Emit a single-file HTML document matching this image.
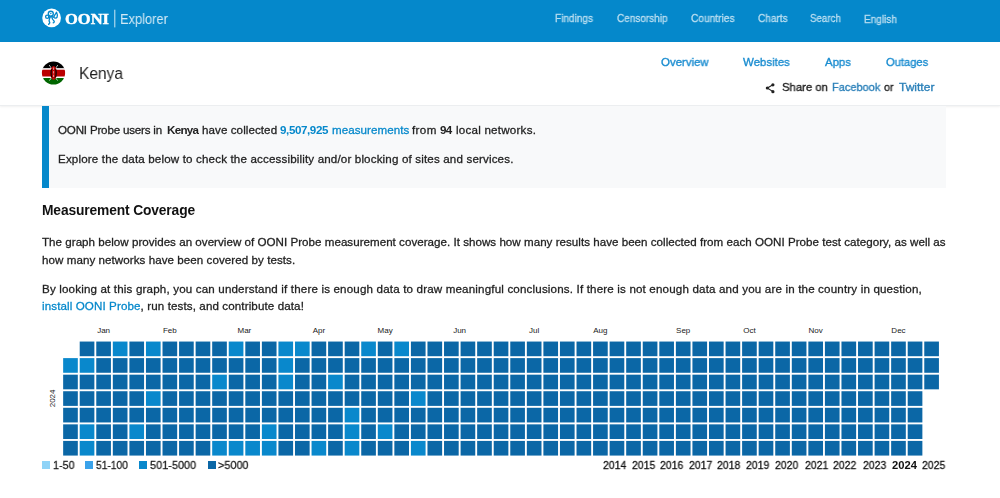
<!DOCTYPE html>
<html><head><meta charset="utf-8">
<style>
html,body{margin:0;padding:0;background:#fff;}
body{width:1000px;height:498px;overflow:hidden;position:relative;font-family:"Liberation Sans",sans-serif;}
.t{position:absolute;white-space:nowrap;will-change:transform;}
.r{-webkit-text-stroke:0.28px currentColor;}
.r b{-webkit-text-stroke:0;}
.t b{font-weight:700;}
#hdr{position:absolute;left:0;top:0;width:1000px;height:42px;background:#0588cb;}
#sub{position:absolute;left:0;top:42px;width:1000px;height:63px;background:#fff;border-bottom:1px solid #eceef0;box-shadow:0 1px 2px rgba(0,0,0,0.06);}
#box{position:absolute;left:42px;top:106px;width:904px;height:82px;background:#f8f9fa;}
#bar{position:absolute;left:42px;top:106px;width:7px;height:82px;background:#0588cb;}
.sq{position:absolute;top:461px;width:8px;height:8px;}
svg{position:absolute;left:0;top:0;}
</style></head>
<body>
<div id="hdr"></div>
<div id="sub"></div>
<div id="box"></div>
<div id="bar"></div>
<!-- logo -->
<svg width="1000" height="498" viewBox="0 0 1000 498" style="pointer-events:none">
  <circle cx="51.6" cy="17.9" r="9.35" fill="#fff"/>
  <g fill="none" stroke="#0588cb" stroke-width="1.35" stroke-linecap="round" stroke-linejoin="round">
    <circle cx="50.8" cy="13.7" r="2.5"/>
    <circle cx="47.2" cy="16.7" r="1.6"/>
    <path d="M56.5 12.3 C57.6 14.6 57.7 16 57.1 17.1 C56.4 18.4 54.5 18.3 54 17.2 C53.6 16.2 55 15.2 56.5 12.3 Z"/>
    <path d="M50.2 16.4 C49.8 18.8 48.4 20.4 49.4 21.6 C50.2 22.6 49.6 23.6 48.6 24.4"/>
    <path d="M51.6 16.3 C52 18.6 53.2 20.2 54 20.9 C54.6 21.6 54.2 22.6 53.2 22.9"/>
    <path d="M48.6 17.4 C49.2 17.6 49.8 17.4 50.2 17 M53.9 17 C53.2 17.2 52.4 17 51.8 16.5"/>
  </g>
  <circle cx="50.8" cy="13.5" r="0.7" fill="#0588cb"/>
  <rect x="114.3" y="9.7" width="1" height="17.7" fill="rgba(255,255,255,0.8)"/>
  <!-- flag -->
  <defs><clipPath id="fc"><circle cx="53.5" cy="73" r="11.6"/></clipPath></defs>
  <g clip-path="url(#fc)">
    <rect x="41" y="60" width="26" height="8.4" fill="#000"/>
    <rect x="41" y="68.4" width="26" height="1.3" fill="#fff"/>
    <rect x="41" y="69.7" width="26" height="7" fill="#bb0000"/>
    <rect x="41" y="76.7" width="26" height="1.3" fill="#fff"/>
    <rect x="41" y="78" width="26" height="8" fill="#006600"/>
    <path d="M49.2 65 L51.6 68.6 M57.8 65 L55.4 68.6 M49.4 80.6 L51.6 77.6 M57.6 80.6 L55.4 77.6" stroke="#fff" stroke-width="0.7"/>
    <ellipse cx="53.6" cy="73" rx="3.1" ry="6.9" fill="#bb0000"/>
    <clipPath id="band"><rect x="41" y="69.2" width="26" height="8"/></clipPath>
    <g clip-path="url(#band)"><ellipse cx="53.6" cy="73" rx="3.1" ry="6.9" fill="#000"/><ellipse cx="53.6" cy="73" rx="1.9" ry="6.9" fill="#bb0000"/></g>
    <path d="M53.6 67.5 L53.6 78.5" stroke="#fff" stroke-width="0.6" stroke-dasharray="2.4 1.2"/>
  </g>
  <!-- share icon -->
  <g fill="#222">
    <circle cx="772.9" cy="84.8" r="1.6"/>
    <circle cx="767.35" cy="88" r="1.6"/>
    <circle cx="772.9" cy="91.65" r="1.6"/>
  </g>
  <path d="M772.9 84.8 L767.35 88 L772.9 91.65" stroke="#222" stroke-width="1.1" fill="none"/>
  <!-- calendar -->
  <g>
<rect x="79.71" y="341.55" width="14.66" height="14.66" fill="#0b67a6"/>
<rect x="96.27" y="341.55" width="14.66" height="14.66" fill="#0b67a6"/>
<rect x="112.83" y="341.55" width="14.66" height="14.66" fill="#0988cc"/>
<rect x="129.39" y="341.55" width="14.66" height="14.66" fill="#0b67a6"/>
<rect x="145.95" y="341.55" width="14.66" height="14.66" fill="#0988cc"/>
<rect x="162.51" y="341.55" width="14.66" height="14.66" fill="#0b67a6"/>
<rect x="179.07" y="341.55" width="14.66" height="14.66" fill="#0b67a6"/>
<rect x="195.63" y="341.55" width="14.66" height="14.66" fill="#0b67a6"/>
<rect x="212.19" y="341.55" width="14.66" height="14.66" fill="#0b67a6"/>
<rect x="228.75" y="341.55" width="14.66" height="14.66" fill="#0988cc"/>
<rect x="245.31" y="341.55" width="14.66" height="14.66" fill="#0b67a6"/>
<rect x="261.87" y="341.55" width="14.66" height="14.66" fill="#0b67a6"/>
<rect x="278.43" y="341.55" width="14.66" height="14.66" fill="#0988cc"/>
<rect x="294.99" y="341.55" width="14.66" height="14.66" fill="#0988cc"/>
<rect x="311.55" y="341.55" width="14.66" height="14.66" fill="#0b67a6"/>
<rect x="328.11" y="341.55" width="14.66" height="14.66" fill="#0b67a6"/>
<rect x="344.67" y="341.55" width="14.66" height="14.66" fill="#0b67a6"/>
<rect x="361.23" y="341.55" width="14.66" height="14.66" fill="#0988cc"/>
<rect x="377.79" y="341.55" width="14.66" height="14.66" fill="#0b67a6"/>
<rect x="394.35" y="341.55" width="14.66" height="14.66" fill="#0988cc"/>
<rect x="410.91" y="341.55" width="14.66" height="14.66" fill="#0b67a6"/>
<rect x="427.47" y="341.55" width="14.66" height="14.66" fill="#0b67a6"/>
<rect x="444.03" y="341.55" width="14.66" height="14.66" fill="#0b67a6"/>
<rect x="460.59" y="341.55" width="14.66" height="14.66" fill="#0b67a6"/>
<rect x="477.15" y="341.55" width="14.66" height="14.66" fill="#0b67a6"/>
<rect x="493.71" y="341.55" width="14.66" height="14.66" fill="#0b67a6"/>
<rect x="510.27" y="341.55" width="14.66" height="14.66" fill="#0b67a6"/>
<rect x="526.83" y="341.55" width="14.66" height="14.66" fill="#0b67a6"/>
<rect x="543.39" y="341.55" width="14.66" height="14.66" fill="#0b67a6"/>
<rect x="559.95" y="341.55" width="14.66" height="14.66" fill="#0b67a6"/>
<rect x="576.51" y="341.55" width="14.66" height="14.66" fill="#0b67a6"/>
<rect x="593.07" y="341.55" width="14.66" height="14.66" fill="#0b67a6"/>
<rect x="609.63" y="341.55" width="14.66" height="14.66" fill="#0b67a6"/>
<rect x="626.19" y="341.55" width="14.66" height="14.66" fill="#0b67a6"/>
<rect x="642.75" y="341.55" width="14.66" height="14.66" fill="#0b67a6"/>
<rect x="659.31" y="341.55" width="14.66" height="14.66" fill="#0b67a6"/>
<rect x="675.87" y="341.55" width="14.66" height="14.66" fill="#0b67a6"/>
<rect x="692.43" y="341.55" width="14.66" height="14.66" fill="#0b67a6"/>
<rect x="708.99" y="341.55" width="14.66" height="14.66" fill="#0b67a6"/>
<rect x="725.55" y="341.55" width="14.66" height="14.66" fill="#0b67a6"/>
<rect x="742.11" y="341.55" width="14.66" height="14.66" fill="#0b67a6"/>
<rect x="758.67" y="341.55" width="14.66" height="14.66" fill="#0b67a6"/>
<rect x="775.23" y="341.55" width="14.66" height="14.66" fill="#0b67a6"/>
<rect x="791.79" y="341.55" width="14.66" height="14.66" fill="#0b67a6"/>
<rect x="808.35" y="341.55" width="14.66" height="14.66" fill="#0b67a6"/>
<rect x="824.91" y="341.55" width="14.66" height="14.66" fill="#0b67a6"/>
<rect x="841.47" y="341.55" width="14.66" height="14.66" fill="#0b67a6"/>
<rect x="858.03" y="341.55" width="14.66" height="14.66" fill="#0b67a6"/>
<rect x="874.59" y="341.55" width="14.66" height="14.66" fill="#0b67a6"/>
<rect x="891.15" y="341.55" width="14.66" height="14.66" fill="#0b67a6"/>
<rect x="907.71" y="341.55" width="14.66" height="14.66" fill="#0b67a6"/>
<rect x="924.27" y="341.55" width="14.66" height="14.66" fill="#0b67a6"/>
<rect x="63.15" y="358.11" width="14.66" height="14.66" fill="#0988cc"/>
<rect x="79.71" y="358.11" width="14.66" height="14.66" fill="#0988cc"/>
<rect x="96.27" y="358.11" width="14.66" height="14.66" fill="#0b67a6"/>
<rect x="112.83" y="358.11" width="14.66" height="14.66" fill="#0b67a6"/>
<rect x="129.39" y="358.11" width="14.66" height="14.66" fill="#0b67a6"/>
<rect x="145.95" y="358.11" width="14.66" height="14.66" fill="#0b67a6"/>
<rect x="162.51" y="358.11" width="14.66" height="14.66" fill="#0b67a6"/>
<rect x="179.07" y="358.11" width="14.66" height="14.66" fill="#0b67a6"/>
<rect x="195.63" y="358.11" width="14.66" height="14.66" fill="#0b67a6"/>
<rect x="212.19" y="358.11" width="14.66" height="14.66" fill="#0b67a6"/>
<rect x="228.75" y="358.11" width="14.66" height="14.66" fill="#0b67a6"/>
<rect x="245.31" y="358.11" width="14.66" height="14.66" fill="#0b67a6"/>
<rect x="261.87" y="358.11" width="14.66" height="14.66" fill="#0b67a6"/>
<rect x="278.43" y="358.11" width="14.66" height="14.66" fill="#0988cc"/>
<rect x="294.99" y="358.11" width="14.66" height="14.66" fill="#0b67a6"/>
<rect x="311.55" y="358.11" width="14.66" height="14.66" fill="#0b67a6"/>
<rect x="328.11" y="358.11" width="14.66" height="14.66" fill="#0b67a6"/>
<rect x="344.67" y="358.11" width="14.66" height="14.66" fill="#0b67a6"/>
<rect x="361.23" y="358.11" width="14.66" height="14.66" fill="#0b67a6"/>
<rect x="377.79" y="358.11" width="14.66" height="14.66" fill="#0b67a6"/>
<rect x="394.35" y="358.11" width="14.66" height="14.66" fill="#0b67a6"/>
<rect x="410.91" y="358.11" width="14.66" height="14.66" fill="#0b67a6"/>
<rect x="427.47" y="358.11" width="14.66" height="14.66" fill="#0b67a6"/>
<rect x="444.03" y="358.11" width="14.66" height="14.66" fill="#0b67a6"/>
<rect x="460.59" y="358.11" width="14.66" height="14.66" fill="#0b67a6"/>
<rect x="477.15" y="358.11" width="14.66" height="14.66" fill="#0b67a6"/>
<rect x="493.71" y="358.11" width="14.66" height="14.66" fill="#0b67a6"/>
<rect x="510.27" y="358.11" width="14.66" height="14.66" fill="#0b67a6"/>
<rect x="526.83" y="358.11" width="14.66" height="14.66" fill="#0b67a6"/>
<rect x="543.39" y="358.11" width="14.66" height="14.66" fill="#0b67a6"/>
<rect x="559.95" y="358.11" width="14.66" height="14.66" fill="#0b67a6"/>
<rect x="576.51" y="358.11" width="14.66" height="14.66" fill="#0b67a6"/>
<rect x="593.07" y="358.11" width="14.66" height="14.66" fill="#0b67a6"/>
<rect x="609.63" y="358.11" width="14.66" height="14.66" fill="#0b67a6"/>
<rect x="626.19" y="358.11" width="14.66" height="14.66" fill="#0b67a6"/>
<rect x="642.75" y="358.11" width="14.66" height="14.66" fill="#0b67a6"/>
<rect x="659.31" y="358.11" width="14.66" height="14.66" fill="#0b67a6"/>
<rect x="675.87" y="358.11" width="14.66" height="14.66" fill="#0b67a6"/>
<rect x="692.43" y="358.11" width="14.66" height="14.66" fill="#0b67a6"/>
<rect x="708.99" y="358.11" width="14.66" height="14.66" fill="#0b67a6"/>
<rect x="725.55" y="358.11" width="14.66" height="14.66" fill="#0b67a6"/>
<rect x="742.11" y="358.11" width="14.66" height="14.66" fill="#0b67a6"/>
<rect x="758.67" y="358.11" width="14.66" height="14.66" fill="#0b67a6"/>
<rect x="775.23" y="358.11" width="14.66" height="14.66" fill="#0b67a6"/>
<rect x="791.79" y="358.11" width="14.66" height="14.66" fill="#0b67a6"/>
<rect x="808.35" y="358.11" width="14.66" height="14.66" fill="#0b67a6"/>
<rect x="824.91" y="358.11" width="14.66" height="14.66" fill="#0b67a6"/>
<rect x="841.47" y="358.11" width="14.66" height="14.66" fill="#0b67a6"/>
<rect x="858.03" y="358.11" width="14.66" height="14.66" fill="#0b67a6"/>
<rect x="874.59" y="358.11" width="14.66" height="14.66" fill="#0b67a6"/>
<rect x="891.15" y="358.11" width="14.66" height="14.66" fill="#0b67a6"/>
<rect x="907.71" y="358.11" width="14.66" height="14.66" fill="#0b67a6"/>
<rect x="924.27" y="358.11" width="14.66" height="14.66" fill="#0b67a6"/>
<rect x="63.15" y="374.67" width="14.66" height="14.66" fill="#0b67a6"/>
<rect x="79.71" y="374.67" width="14.66" height="14.66" fill="#0b67a6"/>
<rect x="96.27" y="374.67" width="14.66" height="14.66" fill="#0b67a6"/>
<rect x="112.83" y="374.67" width="14.66" height="14.66" fill="#0b67a6"/>
<rect x="129.39" y="374.67" width="14.66" height="14.66" fill="#0b67a6"/>
<rect x="145.95" y="374.67" width="14.66" height="14.66" fill="#0b67a6"/>
<rect x="162.51" y="374.67" width="14.66" height="14.66" fill="#0b67a6"/>
<rect x="179.07" y="374.67" width="14.66" height="14.66" fill="#0b67a6"/>
<rect x="195.63" y="374.67" width="14.66" height="14.66" fill="#0b67a6"/>
<rect x="212.19" y="374.67" width="14.66" height="14.66" fill="#0988cc"/>
<rect x="228.75" y="374.67" width="14.66" height="14.66" fill="#0b67a6"/>
<rect x="245.31" y="374.67" width="14.66" height="14.66" fill="#0b67a6"/>
<rect x="261.87" y="374.67" width="14.66" height="14.66" fill="#0b67a6"/>
<rect x="278.43" y="374.67" width="14.66" height="14.66" fill="#0988cc"/>
<rect x="294.99" y="374.67" width="14.66" height="14.66" fill="#0b67a6"/>
<rect x="311.55" y="374.67" width="14.66" height="14.66" fill="#0b67a6"/>
<rect x="328.11" y="374.67" width="14.66" height="14.66" fill="#0988cc"/>
<rect x="344.67" y="374.67" width="14.66" height="14.66" fill="#0b67a6"/>
<rect x="361.23" y="374.67" width="14.66" height="14.66" fill="#0b67a6"/>
<rect x="377.79" y="374.67" width="14.66" height="14.66" fill="#0b67a6"/>
<rect x="394.35" y="374.67" width="14.66" height="14.66" fill="#0b67a6"/>
<rect x="410.91" y="374.67" width="14.66" height="14.66" fill="#0b67a6"/>
<rect x="427.47" y="374.67" width="14.66" height="14.66" fill="#0b67a6"/>
<rect x="444.03" y="374.67" width="14.66" height="14.66" fill="#0b67a6"/>
<rect x="460.59" y="374.67" width="14.66" height="14.66" fill="#0b67a6"/>
<rect x="477.15" y="374.67" width="14.66" height="14.66" fill="#0b67a6"/>
<rect x="493.71" y="374.67" width="14.66" height="14.66" fill="#0b67a6"/>
<rect x="510.27" y="374.67" width="14.66" height="14.66" fill="#0b67a6"/>
<rect x="526.83" y="374.67" width="14.66" height="14.66" fill="#0b67a6"/>
<rect x="543.39" y="374.67" width="14.66" height="14.66" fill="#0b67a6"/>
<rect x="559.95" y="374.67" width="14.66" height="14.66" fill="#0b67a6"/>
<rect x="576.51" y="374.67" width="14.66" height="14.66" fill="#0b67a6"/>
<rect x="593.07" y="374.67" width="14.66" height="14.66" fill="#0b67a6"/>
<rect x="609.63" y="374.67" width="14.66" height="14.66" fill="#0b67a6"/>
<rect x="626.19" y="374.67" width="14.66" height="14.66" fill="#0b67a6"/>
<rect x="642.75" y="374.67" width="14.66" height="14.66" fill="#0b67a6"/>
<rect x="659.31" y="374.67" width="14.66" height="14.66" fill="#0b67a6"/>
<rect x="675.87" y="374.67" width="14.66" height="14.66" fill="#0b67a6"/>
<rect x="692.43" y="374.67" width="14.66" height="14.66" fill="#0b67a6"/>
<rect x="708.99" y="374.67" width="14.66" height="14.66" fill="#0b67a6"/>
<rect x="725.55" y="374.67" width="14.66" height="14.66" fill="#0b67a6"/>
<rect x="742.11" y="374.67" width="14.66" height="14.66" fill="#0b67a6"/>
<rect x="758.67" y="374.67" width="14.66" height="14.66" fill="#0b67a6"/>
<rect x="775.23" y="374.67" width="14.66" height="14.66" fill="#0b67a6"/>
<rect x="791.79" y="374.67" width="14.66" height="14.66" fill="#0b67a6"/>
<rect x="808.35" y="374.67" width="14.66" height="14.66" fill="#0b67a6"/>
<rect x="824.91" y="374.67" width="14.66" height="14.66" fill="#0b67a6"/>
<rect x="841.47" y="374.67" width="14.66" height="14.66" fill="#0b67a6"/>
<rect x="858.03" y="374.67" width="14.66" height="14.66" fill="#0b67a6"/>
<rect x="874.59" y="374.67" width="14.66" height="14.66" fill="#0b67a6"/>
<rect x="891.15" y="374.67" width="14.66" height="14.66" fill="#0b67a6"/>
<rect x="907.71" y="374.67" width="14.66" height="14.66" fill="#0b67a6"/>
<rect x="924.27" y="374.67" width="14.66" height="14.66" fill="#0b67a6"/>
<rect x="63.15" y="391.23" width="14.66" height="14.66" fill="#0b67a6"/>
<rect x="79.71" y="391.23" width="14.66" height="14.66" fill="#0b67a6"/>
<rect x="96.27" y="391.23" width="14.66" height="14.66" fill="#0b67a6"/>
<rect x="112.83" y="391.23" width="14.66" height="14.66" fill="#0b67a6"/>
<rect x="129.39" y="391.23" width="14.66" height="14.66" fill="#0b67a6"/>
<rect x="145.95" y="391.23" width="14.66" height="14.66" fill="#0988cc"/>
<rect x="162.51" y="391.23" width="14.66" height="14.66" fill="#0b67a6"/>
<rect x="179.07" y="391.23" width="14.66" height="14.66" fill="#0b67a6"/>
<rect x="195.63" y="391.23" width="14.66" height="14.66" fill="#0b67a6"/>
<rect x="212.19" y="391.23" width="14.66" height="14.66" fill="#0b67a6"/>
<rect x="228.75" y="391.23" width="14.66" height="14.66" fill="#0b67a6"/>
<rect x="245.31" y="391.23" width="14.66" height="14.66" fill="#0b67a6"/>
<rect x="261.87" y="391.23" width="14.66" height="14.66" fill="#0b67a6"/>
<rect x="278.43" y="391.23" width="14.66" height="14.66" fill="#0b67a6"/>
<rect x="294.99" y="391.23" width="14.66" height="14.66" fill="#0b67a6"/>
<rect x="311.55" y="391.23" width="14.66" height="14.66" fill="#0b67a6"/>
<rect x="328.11" y="391.23" width="14.66" height="14.66" fill="#0b67a6"/>
<rect x="344.67" y="391.23" width="14.66" height="14.66" fill="#0b67a6"/>
<rect x="361.23" y="391.23" width="14.66" height="14.66" fill="#0b67a6"/>
<rect x="377.79" y="391.23" width="14.66" height="14.66" fill="#0b67a6"/>
<rect x="394.35" y="391.23" width="14.66" height="14.66" fill="#0b67a6"/>
<rect x="410.91" y="391.23" width="14.66" height="14.66" fill="#0988cc"/>
<rect x="427.47" y="391.23" width="14.66" height="14.66" fill="#0b67a6"/>
<rect x="444.03" y="391.23" width="14.66" height="14.66" fill="#0b67a6"/>
<rect x="460.59" y="391.23" width="14.66" height="14.66" fill="#0b67a6"/>
<rect x="477.15" y="391.23" width="14.66" height="14.66" fill="#0b67a6"/>
<rect x="493.71" y="391.23" width="14.66" height="14.66" fill="#0b67a6"/>
<rect x="510.27" y="391.23" width="14.66" height="14.66" fill="#0b67a6"/>
<rect x="526.83" y="391.23" width="14.66" height="14.66" fill="#0b67a6"/>
<rect x="543.39" y="391.23" width="14.66" height="14.66" fill="#0b67a6"/>
<rect x="559.95" y="391.23" width="14.66" height="14.66" fill="#0b67a6"/>
<rect x="576.51" y="391.23" width="14.66" height="14.66" fill="#0b67a6"/>
<rect x="593.07" y="391.23" width="14.66" height="14.66" fill="#0b67a6"/>
<rect x="609.63" y="391.23" width="14.66" height="14.66" fill="#0b67a6"/>
<rect x="626.19" y="391.23" width="14.66" height="14.66" fill="#0b67a6"/>
<rect x="642.75" y="391.23" width="14.66" height="14.66" fill="#0b67a6"/>
<rect x="659.31" y="391.23" width="14.66" height="14.66" fill="#0b67a6"/>
<rect x="675.87" y="391.23" width="14.66" height="14.66" fill="#0b67a6"/>
<rect x="692.43" y="391.23" width="14.66" height="14.66" fill="#0b67a6"/>
<rect x="708.99" y="391.23" width="14.66" height="14.66" fill="#0b67a6"/>
<rect x="725.55" y="391.23" width="14.66" height="14.66" fill="#0b67a6"/>
<rect x="742.11" y="391.23" width="14.66" height="14.66" fill="#0b67a6"/>
<rect x="758.67" y="391.23" width="14.66" height="14.66" fill="#0b67a6"/>
<rect x="775.23" y="391.23" width="14.66" height="14.66" fill="#0b67a6"/>
<rect x="791.79" y="391.23" width="14.66" height="14.66" fill="#0b67a6"/>
<rect x="808.35" y="391.23" width="14.66" height="14.66" fill="#0b67a6"/>
<rect x="824.91" y="391.23" width="14.66" height="14.66" fill="#0b67a6"/>
<rect x="841.47" y="391.23" width="14.66" height="14.66" fill="#0b67a6"/>
<rect x="858.03" y="391.23" width="14.66" height="14.66" fill="#0b67a6"/>
<rect x="874.59" y="391.23" width="14.66" height="14.66" fill="#0b67a6"/>
<rect x="891.15" y="391.23" width="14.66" height="14.66" fill="#0b67a6"/>
<rect x="907.71" y="391.23" width="14.66" height="14.66" fill="#0b67a6"/>
<rect x="63.15" y="407.79" width="14.66" height="14.66" fill="#0b67a6"/>
<rect x="79.71" y="407.79" width="14.66" height="14.66" fill="#0b67a6"/>
<rect x="96.27" y="407.79" width="14.66" height="14.66" fill="#0b67a6"/>
<rect x="112.83" y="407.79" width="14.66" height="14.66" fill="#0b67a6"/>
<rect x="129.39" y="407.79" width="14.66" height="14.66" fill="#0b67a6"/>
<rect x="145.95" y="407.79" width="14.66" height="14.66" fill="#0b67a6"/>
<rect x="162.51" y="407.79" width="14.66" height="14.66" fill="#0b67a6"/>
<rect x="179.07" y="407.79" width="14.66" height="14.66" fill="#0b67a6"/>
<rect x="195.63" y="407.79" width="14.66" height="14.66" fill="#0b67a6"/>
<rect x="212.19" y="407.79" width="14.66" height="14.66" fill="#0b67a6"/>
<rect x="228.75" y="407.79" width="14.66" height="14.66" fill="#0b67a6"/>
<rect x="245.31" y="407.79" width="14.66" height="14.66" fill="#0b67a6"/>
<rect x="261.87" y="407.79" width="14.66" height="14.66" fill="#0b67a6"/>
<rect x="278.43" y="407.79" width="14.66" height="14.66" fill="#0b67a6"/>
<rect x="294.99" y="407.79" width="14.66" height="14.66" fill="#0b67a6"/>
<rect x="311.55" y="407.79" width="14.66" height="14.66" fill="#0b67a6"/>
<rect x="328.11" y="407.79" width="14.66" height="14.66" fill="#0b67a6"/>
<rect x="344.67" y="407.79" width="14.66" height="14.66" fill="#0988cc"/>
<rect x="361.23" y="407.79" width="14.66" height="14.66" fill="#0b67a6"/>
<rect x="377.79" y="407.79" width="14.66" height="14.66" fill="#0b67a6"/>
<rect x="394.35" y="407.79" width="14.66" height="14.66" fill="#0b67a6"/>
<rect x="410.91" y="407.79" width="14.66" height="14.66" fill="#0b67a6"/>
<rect x="427.47" y="407.79" width="14.66" height="14.66" fill="#0b67a6"/>
<rect x="444.03" y="407.79" width="14.66" height="14.66" fill="#0b67a6"/>
<rect x="460.59" y="407.79" width="14.66" height="14.66" fill="#0b67a6"/>
<rect x="477.15" y="407.79" width="14.66" height="14.66" fill="#0b67a6"/>
<rect x="493.71" y="407.79" width="14.66" height="14.66" fill="#0b67a6"/>
<rect x="510.27" y="407.79" width="14.66" height="14.66" fill="#0b67a6"/>
<rect x="526.83" y="407.79" width="14.66" height="14.66" fill="#0b67a6"/>
<rect x="543.39" y="407.79" width="14.66" height="14.66" fill="#0b67a6"/>
<rect x="559.95" y="407.79" width="14.66" height="14.66" fill="#0b67a6"/>
<rect x="576.51" y="407.79" width="14.66" height="14.66" fill="#0b67a6"/>
<rect x="593.07" y="407.79" width="14.66" height="14.66" fill="#0b67a6"/>
<rect x="609.63" y="407.79" width="14.66" height="14.66" fill="#0b67a6"/>
<rect x="626.19" y="407.79" width="14.66" height="14.66" fill="#0b67a6"/>
<rect x="642.75" y="407.79" width="14.66" height="14.66" fill="#0b67a6"/>
<rect x="659.31" y="407.79" width="14.66" height="14.66" fill="#0b67a6"/>
<rect x="675.87" y="407.79" width="14.66" height="14.66" fill="#0b67a6"/>
<rect x="692.43" y="407.79" width="14.66" height="14.66" fill="#0b67a6"/>
<rect x="708.99" y="407.79" width="14.66" height="14.66" fill="#0b67a6"/>
<rect x="725.55" y="407.79" width="14.66" height="14.66" fill="#0b67a6"/>
<rect x="742.11" y="407.79" width="14.66" height="14.66" fill="#0b67a6"/>
<rect x="758.67" y="407.79" width="14.66" height="14.66" fill="#0b67a6"/>
<rect x="775.23" y="407.79" width="14.66" height="14.66" fill="#0b67a6"/>
<rect x="791.79" y="407.79" width="14.66" height="14.66" fill="#0b67a6"/>
<rect x="808.35" y="407.79" width="14.66" height="14.66" fill="#0b67a6"/>
<rect x="824.91" y="407.79" width="14.66" height="14.66" fill="#0b67a6"/>
<rect x="841.47" y="407.79" width="14.66" height="14.66" fill="#0b67a6"/>
<rect x="858.03" y="407.79" width="14.66" height="14.66" fill="#0b67a6"/>
<rect x="874.59" y="407.79" width="14.66" height="14.66" fill="#0b67a6"/>
<rect x="891.15" y="407.79" width="14.66" height="14.66" fill="#0b67a6"/>
<rect x="907.71" y="407.79" width="14.66" height="14.66" fill="#0b67a6"/>
<rect x="63.15" y="424.35" width="14.66" height="14.66" fill="#0b67a6"/>
<rect x="79.71" y="424.35" width="14.66" height="14.66" fill="#0988cc"/>
<rect x="96.27" y="424.35" width="14.66" height="14.66" fill="#0b67a6"/>
<rect x="112.83" y="424.35" width="14.66" height="14.66" fill="#0b67a6"/>
<rect x="129.39" y="424.35" width="14.66" height="14.66" fill="#0988cc"/>
<rect x="145.95" y="424.35" width="14.66" height="14.66" fill="#0b67a6"/>
<rect x="162.51" y="424.35" width="14.66" height="14.66" fill="#0b67a6"/>
<rect x="179.07" y="424.35" width="14.66" height="14.66" fill="#0b67a6"/>
<rect x="195.63" y="424.35" width="14.66" height="14.66" fill="#0b67a6"/>
<rect x="212.19" y="424.35" width="14.66" height="14.66" fill="#0b67a6"/>
<rect x="228.75" y="424.35" width="14.66" height="14.66" fill="#0b67a6"/>
<rect x="245.31" y="424.35" width="14.66" height="14.66" fill="#0b67a6"/>
<rect x="261.87" y="424.35" width="14.66" height="14.66" fill="#0988cc"/>
<rect x="278.43" y="424.35" width="14.66" height="14.66" fill="#0b67a6"/>
<rect x="294.99" y="424.35" width="14.66" height="14.66" fill="#0b67a6"/>
<rect x="311.55" y="424.35" width="14.66" height="14.66" fill="#0b67a6"/>
<rect x="328.11" y="424.35" width="14.66" height="14.66" fill="#0b67a6"/>
<rect x="344.67" y="424.35" width="14.66" height="14.66" fill="#0988cc"/>
<rect x="361.23" y="424.35" width="14.66" height="14.66" fill="#0b67a6"/>
<rect x="377.79" y="424.35" width="14.66" height="14.66" fill="#0988cc"/>
<rect x="394.35" y="424.35" width="14.66" height="14.66" fill="#0b67a6"/>
<rect x="410.91" y="424.35" width="14.66" height="14.66" fill="#0b67a6"/>
<rect x="427.47" y="424.35" width="14.66" height="14.66" fill="#0b67a6"/>
<rect x="444.03" y="424.35" width="14.66" height="14.66" fill="#0b67a6"/>
<rect x="460.59" y="424.35" width="14.66" height="14.66" fill="#0b67a6"/>
<rect x="477.15" y="424.35" width="14.66" height="14.66" fill="#0b67a6"/>
<rect x="493.71" y="424.35" width="14.66" height="14.66" fill="#0b67a6"/>
<rect x="510.27" y="424.35" width="14.66" height="14.66" fill="#0b67a6"/>
<rect x="526.83" y="424.35" width="14.66" height="14.66" fill="#0b67a6"/>
<rect x="543.39" y="424.35" width="14.66" height="14.66" fill="#0b67a6"/>
<rect x="559.95" y="424.35" width="14.66" height="14.66" fill="#0b67a6"/>
<rect x="576.51" y="424.35" width="14.66" height="14.66" fill="#0b67a6"/>
<rect x="593.07" y="424.35" width="14.66" height="14.66" fill="#0b67a6"/>
<rect x="609.63" y="424.35" width="14.66" height="14.66" fill="#0b67a6"/>
<rect x="626.19" y="424.35" width="14.66" height="14.66" fill="#0b67a6"/>
<rect x="642.75" y="424.35" width="14.66" height="14.66" fill="#0b67a6"/>
<rect x="659.31" y="424.35" width="14.66" height="14.66" fill="#0b67a6"/>
<rect x="675.87" y="424.35" width="14.66" height="14.66" fill="#0b67a6"/>
<rect x="692.43" y="424.35" width="14.66" height="14.66" fill="#0b67a6"/>
<rect x="708.99" y="424.35" width="14.66" height="14.66" fill="#0b67a6"/>
<rect x="725.55" y="424.35" width="14.66" height="14.66" fill="#0b67a6"/>
<rect x="742.11" y="424.35" width="14.66" height="14.66" fill="#0b67a6"/>
<rect x="758.67" y="424.35" width="14.66" height="14.66" fill="#0b67a6"/>
<rect x="775.23" y="424.35" width="14.66" height="14.66" fill="#0b67a6"/>
<rect x="791.79" y="424.35" width="14.66" height="14.66" fill="#0b67a6"/>
<rect x="808.35" y="424.35" width="14.66" height="14.66" fill="#0b67a6"/>
<rect x="824.91" y="424.35" width="14.66" height="14.66" fill="#0b67a6"/>
<rect x="841.47" y="424.35" width="14.66" height="14.66" fill="#0b67a6"/>
<rect x="858.03" y="424.35" width="14.66" height="14.66" fill="#0b67a6"/>
<rect x="874.59" y="424.35" width="14.66" height="14.66" fill="#0b67a6"/>
<rect x="891.15" y="424.35" width="14.66" height="14.66" fill="#0b67a6"/>
<rect x="907.71" y="424.35" width="14.66" height="14.66" fill="#0b67a6"/>
<rect x="63.15" y="440.91" width="14.66" height="14.66" fill="#0b67a6"/>
<rect x="79.71" y="440.91" width="14.66" height="14.66" fill="#0988cc"/>
<rect x="96.27" y="440.91" width="14.66" height="14.66" fill="#0b67a6"/>
<rect x="112.83" y="440.91" width="14.66" height="14.66" fill="#0b67a6"/>
<rect x="129.39" y="440.91" width="14.66" height="14.66" fill="#0b67a6"/>
<rect x="145.95" y="440.91" width="14.66" height="14.66" fill="#0b67a6"/>
<rect x="162.51" y="440.91" width="14.66" height="14.66" fill="#0b67a6"/>
<rect x="179.07" y="440.91" width="14.66" height="14.66" fill="#0b67a6"/>
<rect x="195.63" y="440.91" width="14.66" height="14.66" fill="#0b67a6"/>
<rect x="212.19" y="440.91" width="14.66" height="14.66" fill="#0988cc"/>
<rect x="228.75" y="440.91" width="14.66" height="14.66" fill="#0988cc"/>
<rect x="245.31" y="440.91" width="14.66" height="14.66" fill="#0988cc"/>
<rect x="261.87" y="440.91" width="14.66" height="14.66" fill="#0988cc"/>
<rect x="278.43" y="440.91" width="14.66" height="14.66" fill="#0b67a6"/>
<rect x="294.99" y="440.91" width="14.66" height="14.66" fill="#0b67a6"/>
<rect x="311.55" y="440.91" width="14.66" height="14.66" fill="#0988cc"/>
<rect x="328.11" y="440.91" width="14.66" height="14.66" fill="#0b67a6"/>
<rect x="344.67" y="440.91" width="14.66" height="14.66" fill="#0988cc"/>
<rect x="361.23" y="440.91" width="14.66" height="14.66" fill="#0b67a6"/>
<rect x="377.79" y="440.91" width="14.66" height="14.66" fill="#0b67a6"/>
<rect x="394.35" y="440.91" width="14.66" height="14.66" fill="#0b67a6"/>
<rect x="410.91" y="440.91" width="14.66" height="14.66" fill="#0988cc"/>
<rect x="427.47" y="440.91" width="14.66" height="14.66" fill="#0b67a6"/>
<rect x="444.03" y="440.91" width="14.66" height="14.66" fill="#0b67a6"/>
<rect x="460.59" y="440.91" width="14.66" height="14.66" fill="#0b67a6"/>
<rect x="477.15" y="440.91" width="14.66" height="14.66" fill="#0b67a6"/>
<rect x="493.71" y="440.91" width="14.66" height="14.66" fill="#0b67a6"/>
<rect x="510.27" y="440.91" width="14.66" height="14.66" fill="#0b67a6"/>
<rect x="526.83" y="440.91" width="14.66" height="14.66" fill="#0b67a6"/>
<rect x="543.39" y="440.91" width="14.66" height="14.66" fill="#0b67a6"/>
<rect x="559.95" y="440.91" width="14.66" height="14.66" fill="#0b67a6"/>
<rect x="576.51" y="440.91" width="14.66" height="14.66" fill="#0b67a6"/>
<rect x="593.07" y="440.91" width="14.66" height="14.66" fill="#0b67a6"/>
<rect x="609.63" y="440.91" width="14.66" height="14.66" fill="#0b67a6"/>
<rect x="626.19" y="440.91" width="14.66" height="14.66" fill="#0b67a6"/>
<rect x="642.75" y="440.91" width="14.66" height="14.66" fill="#0b67a6"/>
<rect x="659.31" y="440.91" width="14.66" height="14.66" fill="#0b67a6"/>
<rect x="675.87" y="440.91" width="14.66" height="14.66" fill="#0b67a6"/>
<rect x="692.43" y="440.91" width="14.66" height="14.66" fill="#0b67a6"/>
<rect x="708.99" y="440.91" width="14.66" height="14.66" fill="#0b67a6"/>
<rect x="725.55" y="440.91" width="14.66" height="14.66" fill="#0b67a6"/>
<rect x="742.11" y="440.91" width="14.66" height="14.66" fill="#0b67a6"/>
<rect x="758.67" y="440.91" width="14.66" height="14.66" fill="#0b67a6"/>
<rect x="775.23" y="440.91" width="14.66" height="14.66" fill="#0b67a6"/>
<rect x="791.79" y="440.91" width="14.66" height="14.66" fill="#0b67a6"/>
<rect x="808.35" y="440.91" width="14.66" height="14.66" fill="#0b67a6"/>
<rect x="824.91" y="440.91" width="14.66" height="14.66" fill="#0b67a6"/>
<rect x="841.47" y="440.91" width="14.66" height="14.66" fill="#0b67a6"/>
<rect x="858.03" y="440.91" width="14.66" height="14.66" fill="#0b67a6"/>
<rect x="874.59" y="440.91" width="14.66" height="14.66" fill="#0b67a6"/>
<rect x="891.15" y="440.91" width="14.66" height="14.66" fill="#0b67a6"/>
<rect x="907.71" y="440.91" width="14.66" height="14.66" fill="#0b67a6"/>
  </g>
  <g font-family="Liberation Sans, sans-serif" font-size="8" fill="#1a1a1a">
<text x="103.60" y="333.4" text-anchor="middle">Jan</text>
<text x="169.84" y="333.4" text-anchor="middle">Feb</text>
<text x="244.36" y="333.4" text-anchor="middle">Mar</text>
<text x="318.88" y="333.4" text-anchor="middle">Apr</text>
<text x="385.12" y="333.4" text-anchor="middle">May</text>
<text x="459.64" y="333.4" text-anchor="middle">Jun</text>
<text x="534.16" y="333.4" text-anchor="middle">Jul</text>
<text x="600.40" y="333.4" text-anchor="middle">Aug</text>
<text x="683.20" y="333.4" text-anchor="middle">Sep</text>
<text x="749.44" y="333.4" text-anchor="middle">Oct</text>
<text x="815.68" y="333.4" text-anchor="middle">Nov</text>
<text x="898.48" y="333.4" text-anchor="middle">Dec</text>
  </g>
  <text transform="translate(55.3,398.4) rotate(-90)" text-anchor="middle" font-family="Liberation Sans, sans-serif" font-size="8" fill="#1a1a1a">2024</text>
</svg>
<div class="sq" style="left:42px;background:#8fd3f7"></div>
<div class="sq" style="left:85.2px;background:#3aa2ea"></div>
<div class="sq" style="left:139.4px;background:#0988cc"></div>
<div class="sq" style="left:208px;background:#0b67a6"></div>
<div id="nav1" class="t" style="left:555.20px;top:13.31px;font-size:10.50px;line-height:10.50px;font-weight:400;color:rgba(255,255,255,0.6);letter-spacing:0.000px;transform:scaleX(0.9571);transform-origin:0 0;-webkit-text-stroke:0.35px rgba(255,255,255,0.6);">Findings</div>
<div id="nav2" class="t" style="left:616.60px;top:13.31px;font-size:10.50px;line-height:10.50px;font-weight:400;color:rgba(255,255,255,0.6);letter-spacing:0.000px;transform:scaleX(0.9525);transform-origin:0 0;-webkit-text-stroke:0.35px rgba(255,255,255,0.6);">Censorship</div>
<div id="nav3" class="t" style="left:690.60px;top:13.31px;font-size:10.50px;line-height:10.50px;font-weight:400;color:rgba(255,255,255,0.6);letter-spacing:0.000px;transform:scaleX(0.9699);transform-origin:0 0;-webkit-text-stroke:0.35px rgba(255,255,255,0.6);">Countries</div>
<div id="nav4" class="t" style="left:757.60px;top:13.31px;font-size:10.50px;line-height:10.50px;font-weight:400;color:rgba(255,255,255,0.6);letter-spacing:0.000px;transform:scaleX(0.9568);transform-origin:0 0;-webkit-text-stroke:0.35px rgba(255,255,255,0.6);">Charts</div>
<div id="nav5" class="t" style="left:810.00px;top:13.31px;font-size:10.50px;line-height:10.50px;font-weight:400;color:rgba(255,255,255,0.6);letter-spacing:0.000px;transform:scaleX(0.9254);transform-origin:0 0;-webkit-text-stroke:0.35px rgba(255,255,255,0.6);">Search</div>
<div id="nav6" class="t" style="left:864.20px;top:14.21px;font-size:10.50px;line-height:10.50px;font-weight:400;color:rgba(255,255,255,0.6);letter-spacing:0.000px;transform:scaleX(0.9578);transform-origin:0 0;-webkit-text-stroke:0.35px rgba(255,255,255,0.6);">English</div>
<div id="explorer" class="t" style="left:119.70px;top:11.90px;font-size:14.30px;line-height:14.30px;font-weight:400;color:rgba(255,255,255,0.82);letter-spacing:0.000px;transform:scaleX(0.8995);transform-origin:0 0;">Explorer</div>
<div id="ooni" class="t" style="left:65.30px;top:11.25px;font-size:15.30px;line-height:15.30px;font-weight:700;color:#fff;letter-spacing:0.000px;transform:scaleX(1.0785);transform-origin:0 0;font-family:'Liberation Serif',serif;-webkit-text-stroke:0.45px #fff;">OONI</div>
<div id="kenya" class="t" style="left:78.80px;top:65.58px;font-size:16.80px;line-height:16.80px;font-weight:400;color:#1e1e1e;letter-spacing:0.000px;transform:scaleX(0.9245);transform-origin:0 0;">Kenya</div>
<div id="tab1" class="t" style="left:660.80px;top:56.77px;font-size:11.50px;line-height:11.50px;font-weight:400;color:#198cd0;letter-spacing:0.000px;transform:scaleX(0.9930);transform-origin:0 0;-webkit-text-stroke:0.35px #198cd0;">Overview</div>
<div id="tab2" class="t" style="left:743.30px;top:56.77px;font-size:11.50px;line-height:11.50px;font-weight:400;color:#198cd0;letter-spacing:0.000px;transform:scaleX(0.9938);transform-origin:0 0;-webkit-text-stroke:0.35px #198cd0;">Websites</div>
<div id="tab3" class="t" style="left:825.20px;top:56.77px;font-size:11.50px;line-height:11.50px;font-weight:400;color:#198cd0;letter-spacing:0.000px;transform:scaleX(0.9878);transform-origin:0 0;-webkit-text-stroke:0.35px #198cd0;">Apps</div>
<div id="tab4" class="t" style="left:885.90px;top:56.77px;font-size:11.50px;line-height:11.50px;font-weight:400;color:#198cd0;letter-spacing:0.000px;transform:scaleX(0.9705);transform-origin:0 0;-webkit-text-stroke:0.35px #198cd0;">Outages</div>
<div id="shareA" class="t" style="left:781.90px;top:82.21px;font-size:11.80px;line-height:11.80px;font-weight:400;color:#222;letter-spacing:0.000px;transform:scaleX(0.9584);transform-origin:0 0;-webkit-text-stroke:0.35px #222;">Share on</div>
<div id="shareB" class="t" style="left:832.30px;top:82.21px;font-size:11.80px;line-height:11.80px;font-weight:400;color:#2b80b9;letter-spacing:0.000px;transform:scaleX(0.9322);transform-origin:0 0;-webkit-text-stroke:0.35px #2b80b9;">Facebook</div>
<div id="shareC" class="t" style="left:884.20px;top:82.21px;font-size:11.80px;line-height:11.80px;font-weight:400;color:#222;letter-spacing:0.000px;transform:scaleX(0.9143);transform-origin:0 0;-webkit-text-stroke:0.35px #222;">or</div>
<div id="shareD" class="t" style="left:898.60px;top:82.21px;font-size:11.80px;line-height:11.80px;font-weight:400;color:#2b80b9;letter-spacing:0.000px;transform:scaleX(1.0187);transform-origin:0 0;-webkit-text-stroke:0.35px #2b80b9;">Twitter</div>
<div id="info1a" class="t r" style="left:58.20px;top:124.48px;font-size:11.60px;line-height:11.60px;font-weight:400;color:#222;letter-spacing:-0.189px;">OONI Probe users in</div>
<div id="info1b" class="t" style="left:166.80px;top:124.48px;font-size:11.60px;line-height:11.60px;font-weight:700;color:#222;letter-spacing:-0.703px;">Kenya</div>
<div id="info1c" class="t r" style="left:201.70px;top:124.48px;font-size:11.60px;line-height:11.60px;font-weight:400;color:#222;letter-spacing:0.075px;">have collected</div>
<div id="info1d" class="t" style="left:280.10px;top:124.48px;font-size:11.60px;line-height:11.60px;font-weight:700;color:#0588cb;letter-spacing:-0.397px;">9,507,925</div>
<div id="info1e" class="t r" style="left:331.80px;top:124.48px;font-size:11.60px;line-height:11.60px;font-weight:400;color:#0588cb;letter-spacing:0.047px;">measurements</div>
<div id="info1f" class="t r" style="left:412.30px;top:124.48px;font-size:11.60px;line-height:11.60px;font-weight:400;color:#222;letter-spacing:0.371px;">from</div>
<div id="info1g" class="t" style="left:440.00px;top:124.48px;font-size:11.60px;line-height:11.60px;font-weight:700;color:#222;letter-spacing:-0.606px;">94</div>
<div id="info1h" class="t r" style="left:456.40px;top:124.48px;font-size:11.60px;line-height:11.60px;font-weight:400;color:#222;letter-spacing:0.229px;">local networks.</div>
<div id="info2" class="t r" style="left:58.00px;top:153.18px;font-size:11.60px;line-height:11.60px;font-weight:400;color:#222;letter-spacing:0.153px;">Explore the data below to check the accessibility and/or blocking of sites and services.</div>
<div id="h2" class="t" style="left:42.30px;top:203.52px;font-size:13.80px;line-height:13.80px;font-weight:700;color:#111;letter-spacing:-0.135px;">Measurement Coverage</div>
<div id="p1a" class="t r" style="left:42.00px;top:235.98px;font-size:11.60px;line-height:11.60px;font-weight:400;color:#222;letter-spacing:0.022px;">The graph below provides an overview of OONI Probe measurement coverage. It shows how many results have been collected from each OONI Probe test category, as well as</div>
<div id="p1b" class="t r" style="left:42.00px;top:253.58px;font-size:11.60px;line-height:11.60px;font-weight:400;color:#222;letter-spacing:0.055px;">how many networks have been covered by tests.</div>
<div id="p2a" class="t r" style="left:42.00px;top:282.78px;font-size:11.60px;line-height:11.60px;font-weight:400;color:#222;letter-spacing:0.162px;">By looking at this graph, you can understand if there is enough data to draw meaningful conclusions. If there is not enough data and you are in the country in question,</div>
<div id="p2b" class="t r" style="left:42.00px;top:299.68px;font-size:11.60px;line-height:11.60px;font-weight:400;color:#222;letter-spacing:0.108px;"><span style="color:#0588cb">install OONI Probe</span>, run tests, and contribute data!</div>
<div id="leg0" class="t r" style="left:52.50px;top:459.18px;font-size:11.60px;line-height:11.60px;font-weight:400;color:#1a1a1a;letter-spacing:0.000px;transform:scaleX(0.9303);transform-origin:0 0;">1-50</div>
<div id="leg1" class="t r" style="left:95.80px;top:459.18px;font-size:11.60px;line-height:11.60px;font-weight:400;color:#1a1a1a;letter-spacing:0.000px;transform:scaleX(0.8807);transform-origin:0 0;">51-100</div>
<div id="leg2" class="t r" style="left:149.80px;top:459.18px;font-size:11.60px;line-height:11.60px;font-weight:400;color:#1a1a1a;letter-spacing:0.000px;transform:scaleX(0.9429);transform-origin:0 0;">501-5000</div>
<div id="leg3" class="t r" style="left:218.20px;top:459.18px;font-size:11.60px;line-height:11.60px;font-weight:400;color:#1a1a1a;letter-spacing:0.000px;transform:scaleX(0.9397);transform-origin:0 0;">&gt;5000</div>
<div id="y2014" class="t r" style="left:603.10px;top:459.62px;font-size:11.20px;line-height:11.20px;font-weight:400;color:#111;letter-spacing:0.000px;transform:scaleX(0.9324);transform-origin:0 0;">2014</div>
<div id="y2015" class="t r" style="left:631.90px;top:459.62px;font-size:11.20px;line-height:11.20px;font-weight:400;color:#111;letter-spacing:0.000px;transform:scaleX(0.9324);transform-origin:0 0;">2015</div>
<div id="y2016" class="t r" style="left:660.20px;top:459.62px;font-size:11.20px;line-height:11.20px;font-weight:400;color:#111;letter-spacing:0.000px;transform:scaleX(0.9324);transform-origin:0 0;">2016</div>
<div id="y2017" class="t r" style="left:689.00px;top:459.62px;font-size:11.20px;line-height:11.20px;font-weight:400;color:#111;letter-spacing:0.000px;transform:scaleX(0.9324);transform-origin:0 0;">2017</div>
<div id="y2018" class="t r" style="left:716.90px;top:459.62px;font-size:11.20px;line-height:11.20px;font-weight:400;color:#111;letter-spacing:0.000px;transform:scaleX(0.9324);transform-origin:0 0;">2018</div>
<div id="y2019" class="t r" style="left:745.80px;top:459.62px;font-size:11.20px;line-height:11.20px;font-weight:400;color:#111;letter-spacing:0.000px;transform:scaleX(0.9324);transform-origin:0 0;">2019</div>
<div id="y2020" class="t r" style="left:774.90px;top:459.62px;font-size:11.20px;line-height:11.20px;font-weight:400;color:#111;letter-spacing:0.000px;transform:scaleX(0.9324);transform-origin:0 0;">2020</div>
<div id="y2021" class="t r" style="left:804.90px;top:459.62px;font-size:11.20px;line-height:11.20px;font-weight:400;color:#111;letter-spacing:0.000px;transform:scaleX(0.9324);transform-origin:0 0;">2021</div>
<div id="y2022" class="t r" style="left:833.40px;top:459.62px;font-size:11.20px;line-height:11.20px;font-weight:400;color:#111;letter-spacing:0.000px;transform:scaleX(0.9324);transform-origin:0 0;">2022</div>
<div id="y2023" class="t r" style="left:862.50px;top:459.62px;font-size:11.20px;line-height:11.20px;font-weight:400;color:#111;letter-spacing:0.000px;transform:scaleX(0.9324);transform-origin:0 0;">2023</div>
<div id="y2024" class="t" style="left:891.70px;top:459.62px;font-size:11.20px;line-height:11.20px;font-weight:700;color:#111;letter-spacing:0.000px;transform:scaleX(1.0004);transform-origin:0 0;">2024</div>
<div id="y2025" class="t r" style="left:922.30px;top:459.62px;font-size:11.20px;line-height:11.20px;font-weight:400;color:#111;letter-spacing:0.000px;transform:scaleX(0.9324);transform-origin:0 0;">2025</div>
</body></html>
